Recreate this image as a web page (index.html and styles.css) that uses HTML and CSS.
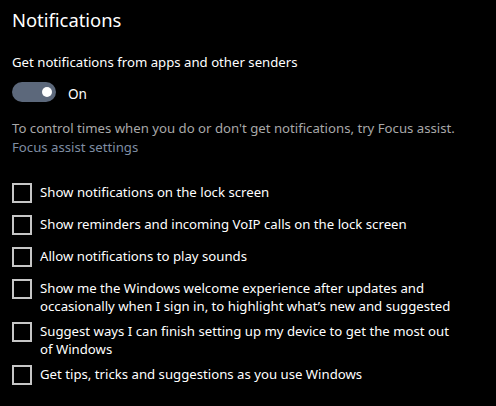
FILE: index.html
```html
<!DOCTYPE html>
<html lang="en">
<head>
<meta charset="utf-8">
<title>Notifications</title>
<link rel="stylesheet" href="styles.css">
</head>
<body>
<main class="page">
  <h1 class="title">Notifications</h1>
  <p class="label">Get notifications from apps and other senders</p>
  <div class="toggle-row">
    <span class="toggle"><span class="knob"></span></span>
    <span class="toggle-text">On</span>
  </div>
  <div class="info">
    <p class="hint">To control times when you do or don't get notifications, try Focus assist.</p>
    <a class="link" href="#">Focus assist settings</a>
  </div>
  <ul class="checks">
    <li class="check"><span class="box"></span><span class="check-text">Show notifications on the lock screen</span></li>
    <li class="check"><span class="box"></span><span class="check-text">Show reminders and incoming VoIP calls on the lock screen</span></li>
    <li class="check"><span class="box"></span><span class="check-text">Allow notifications to play sounds</span></li>
    <li class="check"><span class="box"></span><span class="check-text">Show me the Windows welcome experience after updates and occasionally when I sign in, to highlight what’s new and suggested</span></li>
    <li class="check"><span class="box"></span><span class="check-text">Suggest ways I can finish setting up my device to get the most out of Windows</span></li>
    <li class="check"><span class="box"></span><span class="check-text">Get tips, tricks and suggestions as you use Windows</span></li>
  </ul>
</main>
</body>
</html>
```

FILE: styles.css
```css
html, body {
  margin: 0;
  padding: 0;
  background: #000;
}
body {
  width: 496px;
  height: 406px;
  overflow: hidden;
  font-family: "Noto Sans", "Open Sans", sans-serif;
  color: #fff;
}
.page {
  display: flex;
  flex-direction: column;
  padding: 6px 0 0 12px;
}
.title {
  margin: 0;
  font-size: 18.4px;
  font-weight: 400;
  line-height: 28px;
  height: 28px;
}
.label {
  margin: 19px 0 0;
  font-size: 13.2px;
  line-height: 19px;
}
.toggle-row {
  display: flex;
  align-items: center;
  gap: 12px;
  margin-top: 10px;
  height: 20px;
}
.toggle {
  width: 44px;
  height: 20px;
  border-radius: 10px;
  background: #5c687b;
  display: flex;
  align-items: center;
  justify-content: flex-end;
  padding-right: 4px;
  box-sizing: border-box;
}
.knob {
  width: 10px;
  height: 10px;
  border-radius: 50%;
  background: #fff;
}
.toggle-text {
  font-size: 13.6px;
  line-height: 19px;
  padding-top: 2px;
}
.info {
  margin-top: 17px;
  display: flex;
  flex-direction: column;
  font-size: 13.2px;
  line-height: 19px;
}
.hint {
  margin: 0;
  color: #a8a8a8;
}
.link {
  color: #7f8da3;
  text-decoration: none;
  align-self: flex-start;
}
.checks {
  list-style: none;
  margin: 26px 0 0;
  padding: 0;
  display: flex;
  flex-direction: column;
}
.check {
  display: flex;
  align-items: flex-start;
  gap: 8px;
  min-height: 32px;
}
.box {
  flex: none;
  width: 20px;
  height: 20px;
  border: 2px solid #c6c6c6;
  box-sizing: border-box;
}
.check-text {
  max-width: 420px;
  font-size: 13.2px;
  line-height: 18px;
  padding-bottom: 7px;
}
```
